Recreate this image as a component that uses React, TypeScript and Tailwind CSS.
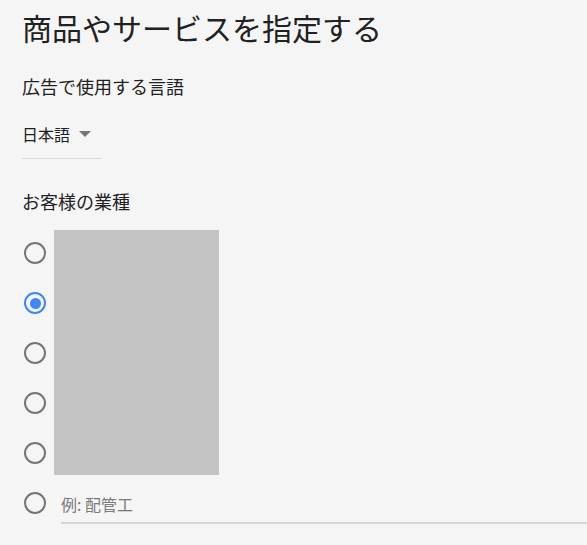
import { useState } from 'react'

const font = { fontFamily: '"Noto Sans CJK JP", "Noto Sans", sans-serif' }

function Radio({ checked, onClick }: { checked?: boolean; onClick?: () => void }) {
  return (
    <button
      onClick={onClick}
      className={`flex h-[22px] w-[22px] items-center justify-center rounded-full border-2 ${
        checked ? 'border-[#4285f4]' : 'border-[#757575]'
      }`}
    >
      {checked && <span className="h-[11px] w-[11px] rounded-full bg-[#4285f4]" />}
    </button>
  )
}

export default function App() {
  const [selected, setSelected] = useState(1)
  const rows = [0, 1, 2, 3, 4]

  return (
    <div className="min-h-[545px] bg-[#f5f5f5] pl-[22px] text-[#212121]" style={font}>
      <h1 className="pt-[8px] text-[30px] leading-[38px] font-normal">商品やサービスを指定する</h1>

      <p className="mt-[28px] text-[18px] leading-[24px]">広告で使用する言語</p>

      <div className="mt-[25px] flex w-[79px] items-center border-b border-[#d8d8d8] pb-[13px]">
        <span className="text-[16px] leading-[22px]">日本語</span>
        <svg width="12" height="6" viewBox="0 0 12 6" className="ml-[9px]">
          <path d="M0 0h12L6 6z" fill="#757575" />
        </svg>
      </div>

      <p className="mt-[30px] text-[18px] leading-[24px]">お客様の業種</p>

      <div className="mt-[15px] grid grid-cols-[32px_1fr] grid-rows-[repeat(6,50px)]">
        {rows.map(i => (
          <div key={i} className="col-start-1 flex items-center pl-[2px]" style={{ gridRowStart: i + 1 }}>
            <Radio checked={selected === i} onClick={() => setSelected(i)} />
          </div>
        ))}
        <div className="col-start-2 row-start-1 row-end-6 mb-[3px] mt-[2px] w-[165px] bg-[#c3c3c3]" />
        <div className="col-start-1 row-start-6 flex items-center pl-[2px]">
          <Radio checked={selected === 5} onClick={() => setSelected(5)} />
        </div>
        <div className="col-start-2 row-start-6 pl-[7px]">
          <input
            placeholder="例: 配管工"
            className="mt-[14px] w-full border-b-2 border-[#d6d6d6] bg-transparent pb-[6px] text-[16px] leading-[24px] outline-none placeholder:text-[#7a7a7a]"
          />
        </div>
      </div>
    </div>
  )
}
